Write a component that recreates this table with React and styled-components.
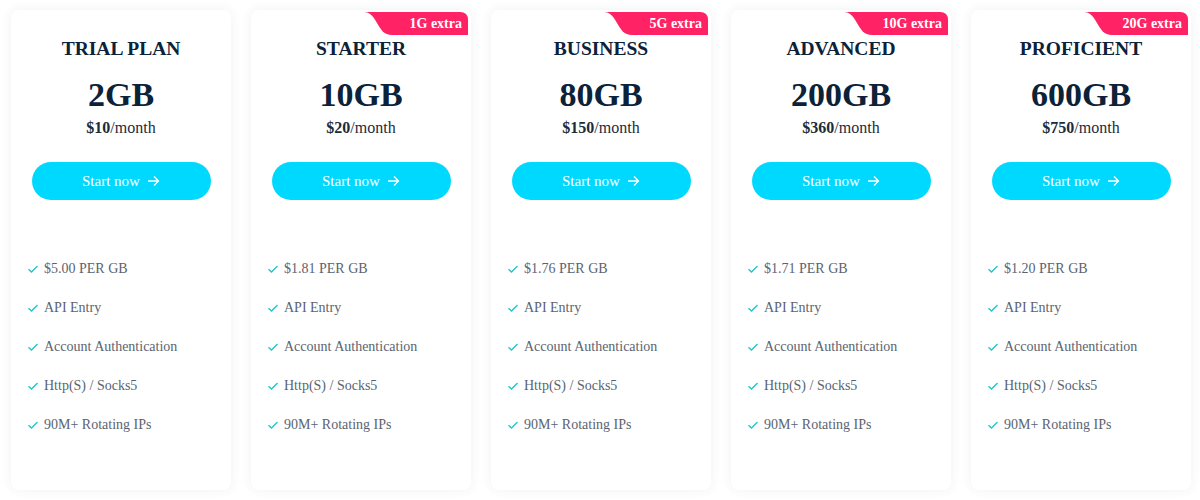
import React from 'react';
import styled, { createGlobalStyle } from 'styled-components';

const GlobalStyle = createGlobalStyle`
  body {
    margin: 0;
    background: #ffffff;
    font-family: "Liberation Serif", "Times New Roman", serif;
  }
`;

const Page = styled.div`
  display: flex;
  gap: 20px;
  padding: 10px 9px 10px 11px;
`;

const Card = styled.div`
  position: relative;
  width: 220px;
  height: 480px;
  box-sizing: border-box;
  background: #ffffff;
  border-radius: 8px;
  box-shadow: 0 0 12px rgba(30, 50, 80, 0.07);
  padding: 27px 20px 0;
  display: flex;
  flex-direction: column;
  align-items: center;
`;

const Badge = styled.div`
  position: absolute;
  top: 2px;
  right: 3px;
  width: 104px;
  height: 23px;
  display: flex;
  align-items: center;
  justify-content: flex-end;
  padding-right: 6px;
  box-sizing: border-box;
  color: #ffffff;
  font-weight: bold;
  font-size: 14px;
  svg {
    position: absolute;
    left: 0;
    top: 0;
  }
  span {
    position: relative;
  }
`;

const Title = styled.h3`
  margin: 0;
  font-size: 19.5px;
  line-height: 24px;
  font-weight: bold;
  color: #0b2239;
`;

const Size = styled.div`
  margin-top: 14px;
  font-size: 34px;
  line-height: 40px;
  font-weight: bold;
  color: #0b2239;
`;

const Price = styled.div`
  margin-top: 3px;
  font-size: 16px;
  line-height: 20px;
  color: #1d2b3a;
  b {
    font-weight: bold;
  }
`;

const StartButton = styled.button`
  margin-top: 24px;
  width: 179px;
  height: 38px;
  border: none;
  border-radius: 19px;
  background: #00d9ff;
  color: #ffffff;
  font-family: inherit;
  font-size: 15px;
  display: flex;
  align-items: center;
  justify-content: center;
  gap: 7px;
  cursor: pointer;
`;

const Features = styled.ul`
  list-style: none;
  margin: 59px 0 0 -4px;
  padding: 0;
  align-self: stretch;
  display: flex;
  flex-direction: column;
  gap: 19px;
`;

const Feature = styled.li`
  display: flex;
  align-items: center;
  gap: 5px;
  font-size: 14px;
  line-height: 20px;
  color: #5b6370;
`;

const plans = [
  { name: 'TRIAL PLAN', size: '2GB', price: '$10', per: '$5.00' },
  { name: 'STARTER', size: '10GB', price: '$20', per: '$1.81', extra: '1G extra' },
  { name: 'BUSINESS', size: '80GB', price: '$150', per: '$1.76', extra: '5G extra' },
  { name: 'ADVANCED', size: '200GB', price: '$360', per: '$1.71', extra: '10G extra' },
  { name: 'PROFICIENT', size: '600GB', price: '$750', per: '$1.20', extra: '20G extra' },
];

const Check = () => (
  <svg width="12" height="12" viewBox="0 0 12 12">
    <path d="M1.5 6.2 L4.5 9 L10.5 3" fill="none" stroke="#22c7c7" strokeWidth="1.4" />
  </svg>
);

const Arrow = () => (
  <svg width="13" height="12" viewBox="0 0 13 12">
    <path d="M1 6 H11.5 M7 1.5 L11.5 6 L7 10.5" fill="none" stroke="#fff" strokeWidth="1.3" />
  </svg>
);

const BadgeShape = () => (
  <svg width="104" height="23" viewBox="0 0 104 23">
    <path
      d="M0 0 H96 Q104 0 104 8 V23 H28 C20 23 17 18 13 11 C9 4 6 0 0 0 Z"
      fill="#ff2366"
    />
  </svg>
);

export default function App() {
  return (
    <>
      <GlobalStyle />
      <Page>
        {plans.map((p) => (
          <Card key={p.name}>
            {p.extra && (
              <Badge>
                <BadgeShape />
                <span>{p.extra}</span>
              </Badge>
            )}
            <Title>{p.name}</Title>
            <Size>{p.size}</Size>
            <Price>
              <b>{p.price}</b>/month
            </Price>
            <StartButton>
              Start now <Arrow />
            </StartButton>
            <Features>
              {[`${p.per} PER GB`, 'API Entry', 'Account Authentication', 'Http(S) / Socks5', '90M+ Rotating IPs'].map((f) => (
                <Feature key={f}>
                  <Check />
                  {f}
                </Feature>
              ))}
            </Features>
          </Card>
        ))}
      </Page>
    </>
  );
}
